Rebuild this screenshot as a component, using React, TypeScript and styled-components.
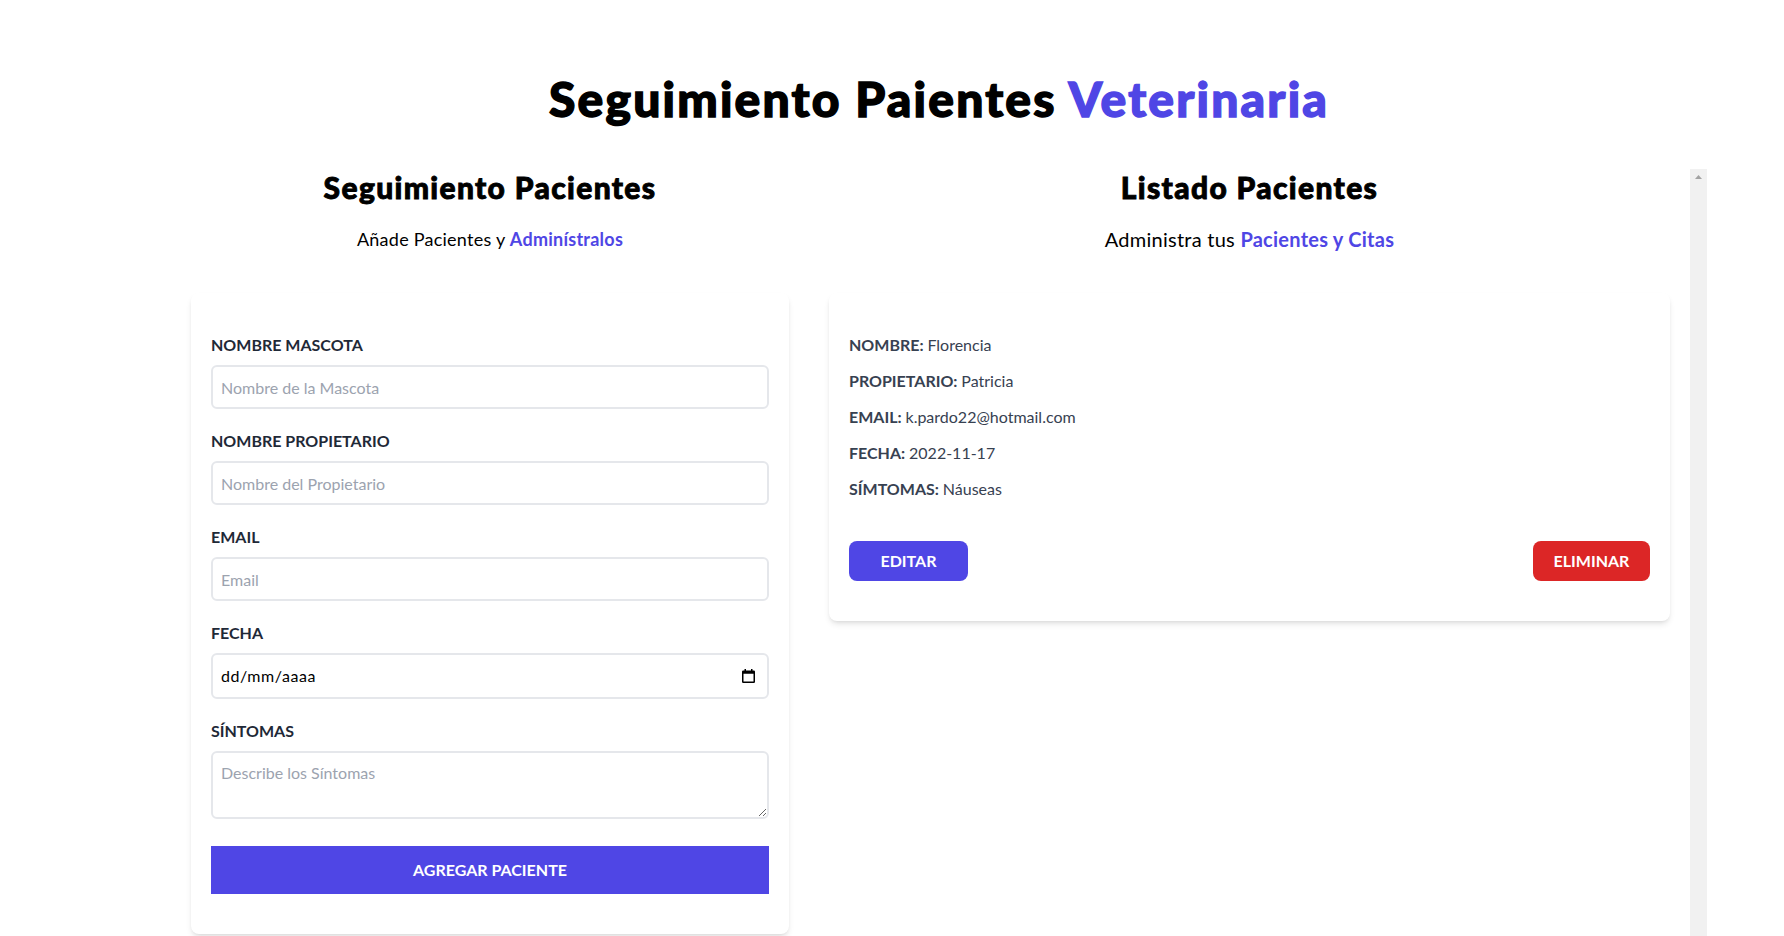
import React from "react";
import styled, { createGlobalStyle, css } from "styled-components";

const GlobalStyle = createGlobalStyle`
  *, *::before, *::after { box-sizing: border-box; }
  html, body { margin: 0; padding: 0; height: 100%; overflow: hidden; background: #ffffff; }
  body {
    font-family: Lato, "Open Sans", sans-serif;
    line-height: 1.5;
    color: #000000;
  }
`;

const Page = styled.div`
  padding-top: 75px;
`;

const Container = styled.div`
  width: 1536px;
  margin-left: 171px;
`;

const Title = styled.h1`
  margin: 0;
  font-size: 48px;
  line-height: 1;
  font-weight: 900;
  letter-spacing: 2.2px;
  -webkit-text-stroke: 1.4px currentColor;
  text-align: center;
`;

const Accent = styled.span<{ $bold?: boolean }>`
  color: #4f46e5;
  font-weight: ${(p) => (p.$bold ? 700 : "inherit")};
`;

const Columns = styled.div`
  display: flex;
  margin-top: 46px;
`;

const FormColumn = styled.section`
  width: 638px;
  flex-shrink: 0;
`;

const ListColumn = styled.section`
  flex: 1;
  min-width: 0;
  height: 100vh;
  display: flex;
`;

const ListScroller = styled.div`
  flex: 1;
  min-width: 0;
  overflow-y: auto;
`;

const ScrollTrack = styled.div`
  width: 17px;
  flex-shrink: 0;
  background: #f1f1f1;
  display: flex;
  flex-direction: column;
  align-items: center;
`;

const ScrollArrow = styled.svg`
  display: block;
  margin-top: 6px;
`;

const SectionTitle = styled.h2`
  margin: 0;
  font-size: 30px;
  line-height: 36px;
  font-weight: 900;
  letter-spacing: 1.35px;
  -webkit-text-stroke: 0.9px currentColor;
  text-align: center;
`;

const SectionText = styled.p<{ $size: number }>`
  margin: 20px 0 40px;
  font-size: ${(p) => p.$size}px;
  line-height: 28px;
  letter-spacing: 0.25px;
  text-align: center;
`;

const Card = styled.div`
  margin: 0 20px 40px;
  padding: 40px 20px;
  background: #ffffff;
  border-radius: 8px;
  box-shadow: 0 4px 6px -1px rgba(0, 0, 0, 0.1), 0 2px 4px -2px rgba(0, 0, 0, 0.1);
`;

const Field = styled.div<{ $space?: number }>`
  margin-bottom: ${(p) => p.$space ?? 20}px;
`;

const Label = styled.label`
  display: block;
  color: #1f2937;
  text-transform: uppercase;
  font-weight: 700;
  font-size: 16px;
  line-height: 24px;
`;

const fieldBase = css`
  display: block;
  width: 100%;
  margin-top: 8px;
  padding: 8px;
  border: 2px solid #e5e7eb;
  border-radius: 6px;
  font-family: inherit;
  font-size: 16px;
  line-height: 24px;
  color: #000000;
  background: #ffffff;
  outline: none;
  &::placeholder {
    color: #9ca3af;
  }
`;

const TextInput = styled.input`
  ${fieldBase}
  height: 44px;
`;

const DateBox = styled.div`
  ${fieldBase}
  height: 46px;
  display: flex;
  align-items: center;
  justify-content: space-between;
  padding-right: 12px;
`;

const DateText = styled.span`
  letter-spacing: 0.55px;
`;

const TextArea = styled.textarea`
  ${fieldBase}
  height: 68px;
`;

const SubmitButton = styled.input`
  display: block;
  width: 100%;
  height: 48px;
  padding: 12px;
  border: none;
  background: #4f46e5;
  color: #ffffff;
  font-family: inherit;
  font-size: 16px;
  line-height: 24px;
  font-weight: 700;
  text-transform: uppercase;
  cursor: pointer;
`;

const InfoLine = styled.p`
  margin: 0 0 12px;
  font-size: 16px;
  line-height: 24px;
  font-weight: 700;
  color: #374151;
  text-transform: uppercase;
`;

const InfoValue = styled.span`
  font-weight: 400;
  text-transform: none;
`;

const Actions = styled.div`
  display: flex;
  justify-content: space-between;
  margin-top: 40px;
`;

const ActionButton = styled.button<{ $danger?: boolean; $width: number }>`
  width: ${(p) => p.$width}px;
  height: 40px;
  padding: 8px 0;
  border: none;
  border-radius: 8px;
  background: ${(p) => (p.$danger ? "#dc2626" : "#4f46e5")};
  color: #ffffff;
  font-family: inherit;
  font-size: 16px;
  line-height: 24px;
  font-weight: 700;
  text-transform: uppercase;
  cursor: pointer;
`;

const CalendarIcon = () => (
  <svg width="13" height="14" viewBox="0 0 13 14" aria-hidden="true">
    <rect x="2.5" y="0" width="1.5" height="2.5" fill="#000" />
    <rect x="9" y="0" width="1.5" height="2.5" fill="#000" />
    <rect x="0.75" y="2.25" width="11.5" height="11" fill="none" stroke="#000" strokeWidth="1.5" rx="0.5" />
    <rect x="0.75" y="2.25" width="11.5" height="2.5" fill="#000" />
  </svg>
);

const patient = {
  nombre: "Florencia",
  propietario: "Patricia",
  email: "k.pardo22@hotmail.com",
  fecha: "2022-11-17",
  sintomas: "Náuseas",
};

export default function App() {
  return (
    <>
      <GlobalStyle />
      <Page>
        <Container>
          <Title>
            Seguimiento Paientes <Accent>Veterinaria</Accent>
          </Title>
          <Columns>
            <FormColumn>
              <SectionTitle>Seguimiento Pacientes</SectionTitle>
              <SectionText $size={18}>
                Añade Pacientes y <Accent $bold>Adminístralos</Accent>
              </SectionText>
              <Card as="form" onSubmit={(e: React.FormEvent) => e.preventDefault()}>
                <Field>
                  <Label htmlFor="mascota">Nombre Mascota</Label>
                  <TextInput id="mascota" type="text" placeholder="Nombre de la Mascota" />
                </Field>
                <Field>
                  <Label htmlFor="propietario">Nombre Propietario</Label>
                  <TextInput id="propietario" type="text" placeholder="Nombre del Propietario" />
                </Field>
                <Field>
                  <Label htmlFor="email">Email</Label>
                  <TextInput id="email" type="email" placeholder="Email" />
                </Field>
                <Field>
                  <Label htmlFor="alta">Fecha</Label>
                  <DateBox id="alta">
                    <DateText>dd/mm/aaaa</DateText>
                    <CalendarIcon />
                  </DateBox>
                </Field>
                <Field $space={27}>
                  <Label htmlFor="sintomas">Síntomas</Label>
                  <TextArea id="sintomas" placeholder="Describe los Síntomas" />
                </Field>
                <SubmitButton type="submit" value="Agregar Paciente" />
              </Card>
            </FormColumn>
            <ListColumn>
              <ListScroller>
                <SectionTitle>Listado Pacientes</SectionTitle>
                <SectionText $size={20}>
                  Administra tus <Accent $bold>Pacientes y Citas</Accent>
                </SectionText>
                <Card>
                  <InfoLine>
                    Nombre: <InfoValue>{patient.nombre}</InfoValue>
                  </InfoLine>
                  <InfoLine>
                    Propietario: <InfoValue>{patient.propietario}</InfoValue>
                  </InfoLine>
                  <InfoLine>
                    Email: <InfoValue>{patient.email}</InfoValue>
                  </InfoLine>
                  <InfoLine>
                    Fecha: <InfoValue>{patient.fecha}</InfoValue>
                  </InfoLine>
                  <InfoLine>
                    Símtomas: <InfoValue>{patient.sintomas}</InfoValue>
                  </InfoLine>
                  <Actions>
                    <ActionButton type="button" $width={119}>
                      Editar
                    </ActionButton>
                    <ActionButton type="button" $danger $width={117}>
                      Eliminar
                    </ActionButton>
                  </Actions>
                </Card>
              </ListScroller>
              <ScrollTrack aria-hidden="true">
                <ScrollArrow width="7" height="4" viewBox="0 0 7 4">
                  <polygon points="0,4 3.5,0 7,4" fill="#a3a3a3" />
                </ScrollArrow>
              </ScrollTrack>
            </ListColumn>
          </Columns>
        </Container>
      </Page>
    </>
  );
}
